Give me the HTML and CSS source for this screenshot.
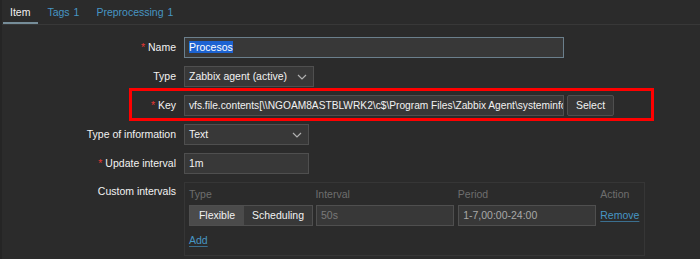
FILE: index.html
```html
<!DOCTYPE html>
<html>
<head>
<meta charset="utf-8">
<link rel="stylesheet" href="styles.css">
</head>
<body>
<div class="page">
  <div class="tabs">
    <span class="tab active">Item</span>
    <span class="tab">Tags <span class="count">1</span></span>
    <span class="tab">Preprocessing <span class="count">1</span></span>
  </div>
  <div class="form">
    <label class="lbl"><span class="req">*</span> Name</label>
    <div class="field"><div class="input wide focus"><span class="sel">Procesos</span></div></div>

    <label class="lbl">Type</label>
    <div class="field"><div class="input select type">Zabbix agent (active)<svg class="chev" width="10" height="6" viewBox="0 0 10 6"><path d="M1 1l4 4 4-4" fill="none" stroke="#b0b0b0" stroke-width="1.2"/></svg></div></div>

    <label class="lbl"><span class="req">*</span> Key</label>
    <div class="field keyrow">
      <div class="input wide key">vfs.file.contents[\\NGOAM8ASTBLWRK2\c$\Program Files\Zabbix Agent\systeminfo.txt]</div>
      <div class="btn">Select</div>
      <div class="redbox"></div>
    </div>

    <label class="lbl">Type of information</label>
    <div class="field"><div class="input select info">Text<svg class="chev" width="10" height="6" viewBox="0 0 10 6"><path d="M1 1l4 4 4-4" fill="none" stroke="#b0b0b0" stroke-width="1.2"/></svg></div></div>

    <label class="lbl"><span class="req">*</span> Update interval</label>
    <div class="field"><div class="input info">1m</div></div>

    <label class="lbl top">Custom intervals</label>
    <div class="field">
      <div class="intervals">
        <div class="ihead">
          <span class="c1">Type</span>
          <span class="c2">Interval</span>
          <span class="c3">Period</span>
          <span class="c4">Action</span>
        </div>
        <div class="irow">
          <div class="c1 seg"><span class="on">Flexible</span><span>Scheduling</span></div>
          <div class="c2 input ph">50s</div>
          <div class="c3 input ph2">1-7,00:00-24:00</div>
          <a class="c4 link">Remove</a>
        </div>
        <a class="link add">Add</a>
      </div>
    </div>
  </div>
</div>
</body>
</html>
```

FILE: styles.css
```css
* { box-sizing: border-box; }
html, body {
  margin: 0;
  background: #2b2b2b;
  color: #f2f2f2;
  font-family: "Liberation Sans", Arial, sans-serif;
  font-size: 10.5px;
}
.page {
  width: 700px;
  height: 259px;
  overflow: hidden;
  border-left: 2px solid #252525;
}
.tabs {
  display: flex;
  height: 25px;
  border-bottom: 1px solid #383838;
  padding-left: 1px;
}
.tab {
  color: #4796c4;
  padding: 6px 8px 0 7px;
  margin-right: 2px;
  height: 24px;
}
.tab .count { margin-left: 1px; }
.tab.active {
  color: #f2f2f2;
  border-bottom: 2px solid #768d99;
}
.form {
  display: grid;
  grid-template-columns: 174px 1fr;
  column-gap: 8px;
  row-gap: 8px;
  padding-top: 12px;
}
.lbl {
  text-align: right;
  height: 21px;
  line-height: 21px;
  white-space: nowrap;
}
.lbl.top { line-height: 18px; }
.req { color: #e33734; }
.field { display: flex; align-items: flex-start; position: relative; }
.input {
  height: 21px;
  line-height: 19px;
  background: #383838;
  border: 1px solid #4f4f4f;
  padding: 0 4px;
  white-space: nowrap;
  overflow: hidden;
  color: #f2f2f2;
  position: relative;
}
.input.wide { width: 380px; }
.input.focus { border-color: #6b7f8c; }
.input.key { font-size: 10.2px; }
.sel { background: #1c63d2; color: #fff; }
.input.type { width: 130px; }
.input.info { width: 125px; }
.chev { position: absolute; right: 6px; top: 7px; }
.btn {
  margin-left: 3px;
  height: 21px;
  line-height: 19px;
  width: 47px;
  text-align: center;
  background: #383838;
  border: 1px solid #4f4f4f;
  border-radius: 2px;
}
.redbox {
  position: absolute;
  left: -55px;
  top: -7px;
  width: 525px;
  height: 33px;
  border: 3px solid #ff0000;
  pointer-events: none;
}
.intervals {
  width: 461px;
  height: 74px;
  border: 1px solid #363636;
  padding: 4px 4px 0 4px;
}
.ihead, .irow { display: flex; }
.ihead { color: #6e6e6e; height: 18px; line-height: 14px; }
.c1 { width: 124px; margin-right: 3px; }
.c2 { width: 139px; margin-right: 4px; }
.c3 { width: 139px; margin-right: 4px; }
.c4 { width: 40px; }
.seg {
  display: flex;
  height: 21px;
  border: 1px solid #4f4f4f;
  background: #383838;
}
.seg span {
  line-height: 19px;
  text-align: center;
  flex: 0 0 auto;
}
.seg span:first-child { width: 54px; }
.seg span:last-child { width: 68px; }
.seg .on { background: #4b4b4b; }
.ph { color: #7a7a7a; }
.ph2 { color: #a8a8a8; }
.link {
  color: #4796c4;
  text-decoration: underline;
  text-decoration-color: #3b6f8f;
  text-underline-offset: 2px;
}
.irow .link { line-height: 21px; }
.add { display: inline-block; margin-top: 8px; }
```
